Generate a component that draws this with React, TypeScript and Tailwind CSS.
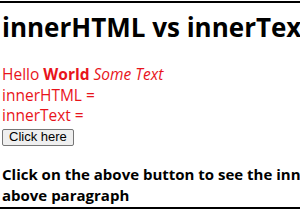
export default function App() {
  return (
    <div className="w-[300px] h-[210px] overflow-hidden bg-white pt-[1px]" style={{ fontFamily: '"Open Sans", "Noto Sans", sans-serif' }}>
      <div className="border-t-2 border-black" />
      <div className="pl-[2px]">
        <h1 className="mt-[10px] text-[26px] leading-[28px] font-bold text-black whitespace-nowrap">innerHTML vs innerText</h1>
        <div className="mt-[23px] text-[15.5px] leading-[20.5px] text-[#e8141b]">
          <p>
            Hello <b>World</b> <i>Some Text</i>
          </p>
          <p>innerHTML =</p>
          <p>innerText =</p>
        </div>
        <button
          className="block mt-[3px] h-[17px] px-[6px] text-[13px] leading-[14px] text-black bg-[#efefef] border border-[#767676] rounded-[2px]"
          style={{ fontFamily: '"Liberation Sans", Arial, sans-serif' }}
        >
          Click here
        </button>
        <p className="mt-[18px] text-[15px] leading-[21px] font-bold text-black whitespace-nowrap">
          Click on the above button to see the innerHTML and innerText of the
          <br />
          above paragraph
        </p>
      </div>
      <div className="mt-[1px] border-t-2 border-black" />
    </div>
  );
}
